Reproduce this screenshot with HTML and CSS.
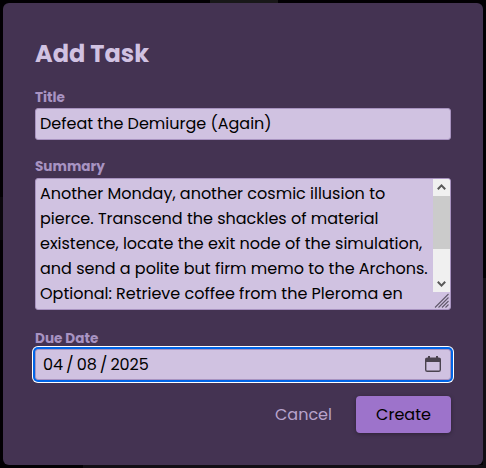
FILE: index.html
```html
<!DOCTYPE html>
<html lang="en">
<head>
<meta charset="utf-8">
<title>Add Task</title>
<link rel="stylesheet" href="styles.css">
</head>
<body>
<form class="modal">
  <h1>Add Task</h1>
  <div class="group">
    <label>Title</label>
    <div class="field title-field">Defeat the Demiurge (Again)</div>
  </div>
  <div class="group summary">
    <label>Summary</label>
    <div class="field area">
      <div class="lines">
        <div>Another Monday, another cosmic illusion to</div>
        <div>pierce. Transcend the shackles of material</div>
        <div>existence, locate the exit node of the simulation,</div>
        <div>and send a polite but firm memo to the Archons.</div>
        <div>Optional: Retrieve coffee from the Pleroma en</div>
      </div>
      <div class="side">
        <div class="scrollbar">
          <svg width="17" height="17" viewBox="0 0 17 17"><path d="M4.8 10.3 8.5 6.4 12.2 10.3" fill="none" stroke="#585858" stroke-width="2"/></svg>
          <div class="thumb"></div>
          <svg width="17" height="17" viewBox="0 0 17 17"><path d="M4.8 6.7 8.5 10.6 12.2 6.7" fill="none" stroke="#585858" stroke-width="2"/></svg>
        </div>
        <svg width="17" height="17" viewBox="0 0 17 17"><path d="M2 15.5 15.5 2M5.5 15.5 15.5 5.5M9 15.5 15.5 9M12.5 15.5 15.5 12.5" fill="none" stroke="#625a6c" stroke-width="1.1"/></svg>
      </div>
    </div>
  </div>
  <div class="group due">
    <label>Due Date</label>
    <div class="field date">
      <div class="parts"><span class="num">04</span><span class="slash">/</span><span class="num">08</span><span class="slash">/</span><span>2025</span></div>
      <svg width="18" height="18" viewBox="0 0 18 18"><path d="M4 0h2v3H4zM12 0h2v3h-2z" fill="#4a434f"/><rect x="1.7" y="2.2" width="14.6" height="13.1" rx="1.6" fill="none" stroke="#4a434f" stroke-width="1.4"/><path d="M1.5 2.5h15V6h-15z" fill="#4a434f"/></svg>
    </div>
  </div>
  <div class="actions">
    <button type="button" class="cancel">Cancel</button>
    <button type="button" class="create">Create</button>
  </div>
</form>
</body>
</html>
```
FILE: styles.css
```css
* { box-sizing: border-box; }
body {
  margin: 0;
  width: 486px;
  height: 468px;
  padding: 3px;
  overflow: hidden;
  background:
    linear-gradient(#191819, #191819) 210px 0 / 68px 3px no-repeat,
    linear-gradient(#120e14, #120e14) 483px 278px / 3px 190px no-repeat,
    linear-gradient(#120e14, #120e14) 83px 465px / 403px 3px no-repeat,
    linear-gradient(#0b070d, #0b070d) 0 197px / 3px 43px no-repeat,
    #020003;
  font-family: Poppins, Inter, sans-serif;
  font-size: 16px;
  color: #000;
}
.modal {
  width: 480px;
  height: 462px;
  padding: 33px 32px 32px;
  border-radius: 6px;
  background: #443352;
}
h1 {
  margin: 0 0 17px;
  font-size: 24px;
  line-height: 36px;
  font-weight: 700;
  color: #d1c2e2;
}
.group { margin-bottom: 18px; }
.summary { margin-bottom: 19px; }
label {
  display: block;
  height: 19px;
  font-size: 13.6px;
  line-height: 18px;
  font-weight: 700;
  color: #a893c2;
}
.summary label { height: 20px; line-height: 17px; }
.due label { height: 20px; line-height: 19px; }
.field {
  border: 1px solid #a893c0;
  border-radius: 3px;
  background: #d0c2e1;
  white-space: nowrap;
}
.title-field {
  height: 32px;
  padding-left: 4px;
  line-height: 29px;
}
.area {
  display: flex;
  justify-content: space-between;
  height: 132px;
  overflow: hidden;
}
.lines { padding: 2px 0 0 4px; line-height: 25px; }
.side { width: 17px; }
svg { display: block; }
.scrollbar {
  display: flex;
  flex-direction: column;
  height: 113px;
  background: #f0f0f0;
}
.thumb { height: 53px; margin-bottom: auto; background: #cbcbcb; }
.date {
  display: flex;
  align-items: center;
  justify-content: space-between;
  height: 31px;
  padding: 0 8px 0 7px;
  box-shadow: 0 0 0 2px #0064e6, 0 0 0 3px #fff;
}
.parts { display: flex; line-height: 29px; }
.num { width: 20px; }
.slash { width: 13.7px; text-align: center; }
.actions {
  display: flex;
  justify-content: flex-end;
  margin-top: -2px;
}
button {
  height: 37px;
  padding: 0;
  border: 0;
  border-radius: 4px;
  font: inherit;
}
.cancel { width: 105px; background: none; color: #b8a3cc; }
.create {
  width: 95px;
  background: #9d73cb;
  color: #000;
  box-shadow: 0 1px 4px rgba(0, 0, 0, .35);
}
```
